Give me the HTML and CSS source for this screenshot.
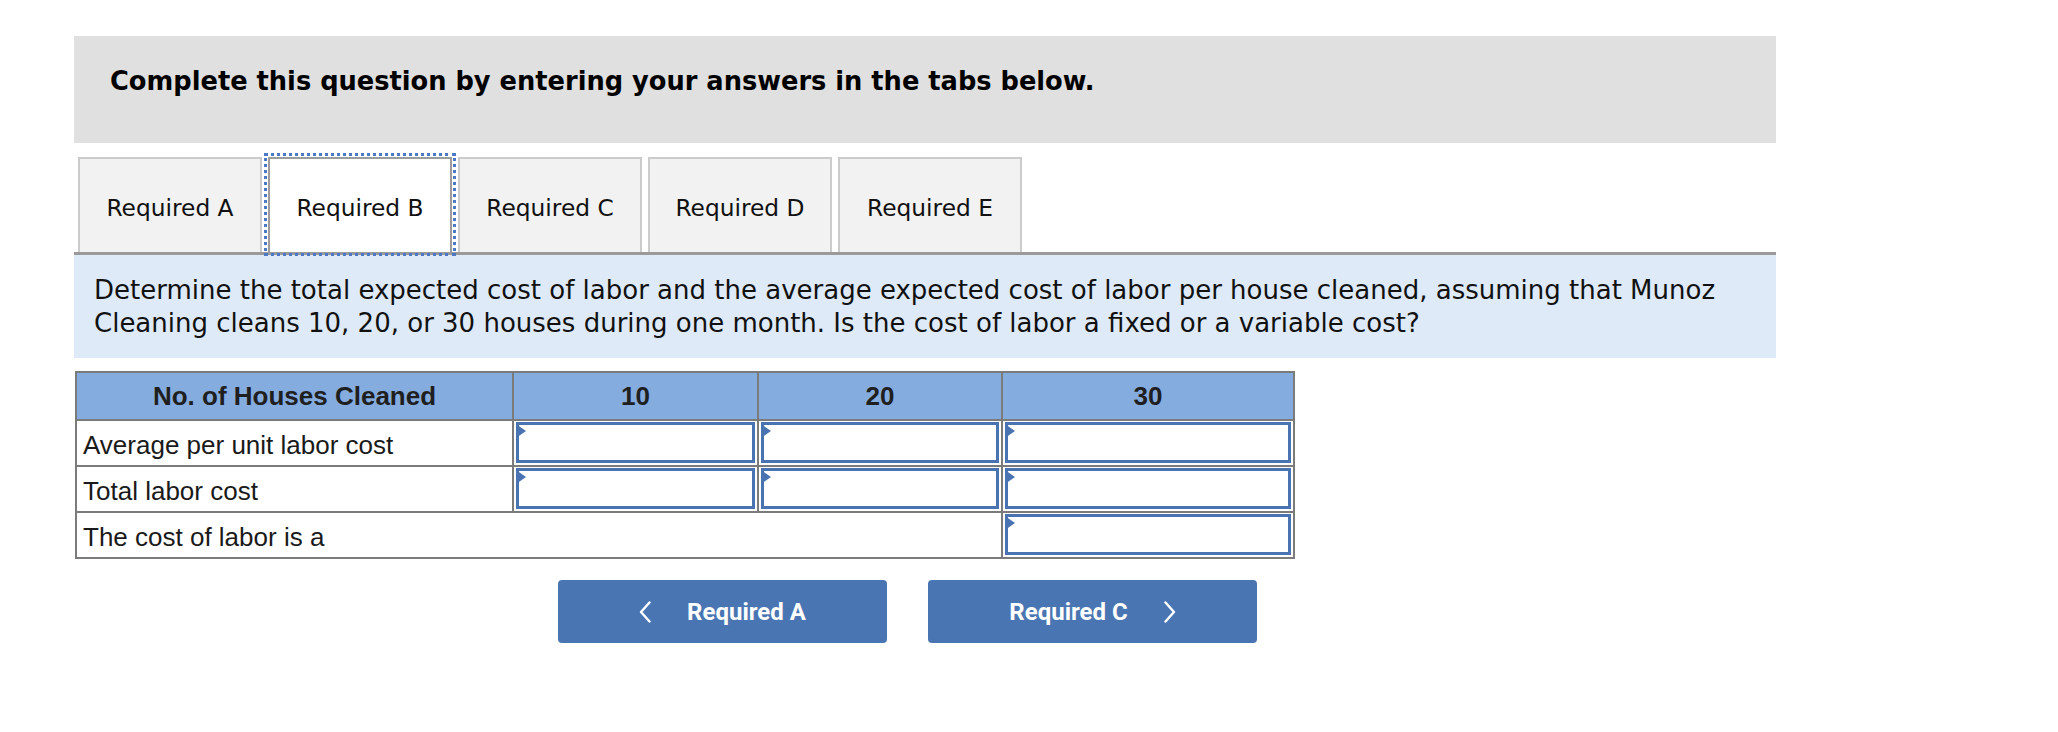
FILE: index.html
```html
<!DOCTYPE html>
<html lang="en">
<head>
<meta charset="utf-8">
<title>Required B</title>
<link rel="stylesheet" href="styles.css">
</head>
<body>
<div class="page">
  <div class="prompt">Complete this question by entering your answers in the tabs below.</div>

  <div class="tabs">
    <div class="tab">Required A</div>
    <div class="tab active">Required B</div>
    <div class="tab">Required C</div>
    <div class="tab">Required D</div>
    <div class="tab">Required E</div>
  </div>

  <div class="instr">Determine the total expected cost of labor and the average expected cost of labor per house cleaned, assuming that Munoz Cleaning cleans 10, 20, or 30 houses during one month. Is the cost of labor a fixed or a variable cost?</div>

  <table class="grid">
    <colgroup>
      <col class="c-label">
      <col class="c-10">
      <col class="c-20">
      <col class="c-30">
    </colgroup>
    <thead>
      <tr>
        <th>No. of Houses Cleaned</th>
        <th>10</th>
        <th>20</th>
        <th>30</th>
      </tr>
    </thead>
    <tbody>
      <tr>
        <td class="label">Average per unit labor cost</td>
        <td class="in"><div class="box"></div></td>
        <td class="in"><div class="box"></div></td>
        <td class="in"><div class="box"></div></td>
      </tr>
      <tr>
        <td class="label">Total labor cost</td>
        <td class="in"><div class="box"></div></td>
        <td class="in"><div class="box"></div></td>
        <td class="in"><div class="box"></div></td>
      </tr>
      <tr>
        <td class="label" colspan="3">The cost of labor is a</td>
        <td class="in"><div class="box"></div></td>
      </tr>
    </tbody>
  </table>

  <div class="nav">
    <button class="btn" type="button">
      <svg class="chev" width="12" height="22" viewBox="0 0 12 22"><polyline points="10.5,1.5 2,11 10.5,20.5" fill="none" stroke="#fff" stroke-width="2.4" stroke-linecap="round" stroke-linejoin="round"/></svg>
      <span>Required A</span>
    </button>
    <button class="btn" type="button">
      <span>Required C</span>
      <svg class="chev" width="12" height="22" viewBox="0 0 12 22"><polyline points="1.5,1.5 10,11 1.5,20.5" fill="none" stroke="#fff" stroke-width="2.4" stroke-linecap="round" stroke-linejoin="round"/></svg>
    </button>
  </div>
</div>
</body>
</html>
```

FILE: styles.css
```css
html, body {
  margin: 0;
  padding: 0;
  background: #ffffff;
}

.page {
  padding: 36px 0 0 74px;
  width: 1702px;
  font-family: "DejaVu Sans", Verdana, sans-serif;
  color: #000;
}

.prompt {
  height: 107px;
  box-sizing: border-box;
  background: #e0e0e0;
  padding: 30px 36px 0 36px;
  font-weight: bold;
  font-size: 25.7px;
  line-height: 30px;
}

.tabs {
  display: flex;
  gap: 6px;
  margin-top: 14px;
  padding-left: 4px;
  border-bottom: 3px solid #9a9a9a;
}

.tab {
  width: 184px;
  height: 95px;
  box-sizing: border-box;
  background: #f2f2f2;
  border: 2px solid #cbcbcb;
  border-bottom: none;
  padding-top: 3px;
  display: flex;
  align-items: center;
  justify-content: center;
  font-size: 23.3px;
  color: #111;
}

.tab.active {
  background: #ffffff;
  border-color: #9c9c9c;
  outline: 3px dotted #4d79c4;
  outline-offset: 1px;
}

.instr {
  background: #deeaf7;
  padding: 19px 20px 18px 20px;
  font-size: 26px;
  line-height: 33px;
  color: #111;
}

.grid {
  margin-top: 13px;
  margin-left: 1px;
  width: 1218px;
  border-collapse: collapse;
  table-layout: fixed;
  font-family: "Liberation Sans", Arial, sans-serif;
  border: 2px solid #7b7b7b;
}

.c-label { width: 437px; }
.c-10 { width: 245px; }
.c-20 { width: 244px; }
.c-30 { width: 292px; }

.grid th {
  background: #85acdf;
  height: 46px;
  padding: 0;
  border: 2px solid #7b7b7b;
  font-size: 26px;
  font-weight: bold;
  color: #1f1f1f;
  text-align: center;
}

.grid td {
  padding: 0;
  border: 2px solid #7b7b7b;
  font-size: 26px;
  line-height: 30px;
  color: #1a1a1a;
}

.grid td.label {
  padding: 3px 0 0 6px;
}

.grid td.in {
  padding: 1px 2px 2px 2px;
}

.box {
  position: relative;
  height: 41px;
  box-sizing: border-box;
  border: 3px solid #4a73b2;
  background: #fff;
}

.box::before {
  content: "";
  position: absolute;
  left: -3px;
  top: -1px;
  border-left: 10px solid #4a73b2;
  border-top: 7px solid transparent;
  border-bottom: 7px solid transparent;
}

.nav {
  display: flex;
  gap: 41px;
  margin-top: 21px;
  padding-left: 484px;
}

.btn {
  width: 329px;
  height: 63px;
  border: none;
  border-radius: 4px;
  background: #4a75b3;
  color: #fff;
  font-family: Roboto, "Liberation Sans", sans-serif;
  font-weight: bold;
  font-size: 24px;
  display: flex;
  align-items: center;
  justify-content: center;
  gap: 36px;
  padding: 0;
}

.chev {
  display: block;
}
```
